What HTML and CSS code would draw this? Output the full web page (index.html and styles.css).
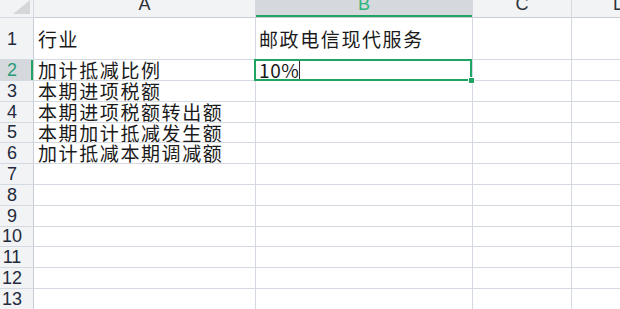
FILE: index.html
```html
<!DOCTYPE html>
<html lang="zh-CN">
<head>
  <meta charset="UTF-8" />
  <meta name="viewport" content="width=device-width, initial-scale=1" />
  <title>工作表</title>
  <link rel="stylesheet" href="styles.css">
</head>
<body>

  <div class="sheet">
    <!-- 列标题 -->
    <div class="corner"><span class="corner-mark"></span></div>
    <div class="col-head"><span>A</span></div>
    <div class="col-head active"><span>B</span></div>
    <div class="col-head"><span>C</span></div>
    <div class="col-head"><span>D</span></div>

    <div class="row-head">1</div>
    <div class="cell">行业</div>
    <div class="cell">邮政电信现代服务</div>
    <div class="cell"></div>
    <div class="cell"></div>

    <div class="row-head active">2</div>
    <div class="cell">加计抵减比例</div>
    <div class="cell selected"><span class="num">10%</span><span class="caret"></span><span class="handle"></span></div>
    <div class="cell"></div>
    <div class="cell"></div>

    <div class="row-head">3</div>
    <div class="cell">本期进项税额</div>
    <div class="cell"></div>
    <div class="cell"></div>
    <div class="cell"></div>

    <div class="row-head">4</div>
    <div class="cell">本期进项税额转出额</div>
    <div class="cell"></div>
    <div class="cell"></div>
    <div class="cell"></div>

    <div class="row-head">5</div>
    <div class="cell">本期加计抵减发生额</div>
    <div class="cell"></div>
    <div class="cell"></div>
    <div class="cell"></div>

    <div class="row-head">6</div>
    <div class="cell">加计抵减本期调减额</div>
    <div class="cell"></div>
    <div class="cell"></div>
    <div class="cell"></div>

    <div class="row-head">7</div>
    <div class="cell"></div>
    <div class="cell"></div>
    <div class="cell"></div>
    <div class="cell"></div>

    <div class="row-head">8</div>
    <div class="cell"></div>
    <div class="cell"></div>
    <div class="cell"></div>
    <div class="cell"></div>

    <div class="row-head">9</div>
    <div class="cell"></div>
    <div class="cell"></div>
    <div class="cell"></div>
    <div class="cell"></div>

    <div class="row-head">10</div>
    <div class="cell"></div>
    <div class="cell"></div>
    <div class="cell"></div>
    <div class="cell"></div>

    <div class="row-head">11</div>
    <div class="cell"></div>
    <div class="cell"></div>
    <div class="cell"></div>
    <div class="cell"></div>

    <div class="row-head">12</div>
    <div class="cell"></div>
    <div class="cell"></div>
    <div class="cell"></div>
    <div class="cell"></div>

    <div class="row-head">13</div>
    <div class="cell"></div>
    <div class="cell"></div>
    <div class="cell"></div>
    <div class="cell"></div>
  </div>

</body>
</html>
```

FILE: styles.css
```css
html, body {
  margin: 0;
  padding: 0;
  background: #fff;
  overflow: hidden;
}
.sheet {
  display: grid;
  grid-template-columns: 34px 222px 217px 99px 96px;
  grid-template-rows: 18px 42px 21px repeat(11, 20.8px);
  width: 668px;
  font-family: "Noto Sans CJK SC", "Liberation Sans", sans-serif;
}
.sheet > div {
  box-sizing: border-box;
  border-right: 1px solid #d5d9e2;
  border-bottom: 1px solid #d5d9e2;
  overflow: hidden;
  white-space: nowrap;
}
.corner {
  background: #f2f3f5;
  display: flex;
  justify-content: flex-end;
  align-items: flex-end;
  padding: 0 3px 3px 0;
}
.corner-mark {
  width: 0;
  height: 0;
  border-left: 17px solid transparent;
  border-bottom: 14px solid #d6d7da;
}
.col-head {
  background: #f2f3f5;
  text-align: center;
  font-family: "Liberation Sans", sans-serif;
  font-size: 18px;
  line-height: 18px;
  color: #2c3038;
  border-bottom-color: #c9cdd6 !important;
}
.col-head span {
  display: block;
  margin-top: -5px;
}
.col-head.active {
  background: #d5d8dd;
  color: #2cb57a;
  box-shadow: inset 0 -2px 0 #1fa463;
}
.row-head {
  background: #f2f3f5;
  display: flex;
  align-items: center;
  justify-content: center;
  padding-right: 9px;
  font-family: "Liberation Sans", sans-serif;
  font-size: 18px;
  line-height: 18px;
  color: #1f2a3c;
  border-right-color: #c9cdd6 !important;
}
.row-head.active {
  background: #d5d8dd;
  color: #2a9d76;
  box-shadow: inset -2px 0 0 #1fa463;
}
.cell {
  display: flex;
  align-items: center;
  padding-left: 3px;
  font-size: 19px;
  line-height: 20px;
  letter-spacing: 1.6px;
  color: #1a1a1a;
}
.cell:nth-child(5n+2) {
  padding-left: 4px;
}
.cell.selected {
  position: relative;
  overflow: visible;
}
.cell.selected::after {
  content: "";
  position: absolute;
  left: -2px;
  right: 0;
  top: -1px;
  bottom: -1px;
  border: 2px solid #1fa463;
  pointer-events: none;
}
.num {
  letter-spacing: 0.6px;
}
.caret {
  width: 1px;
  height: 18px;
  background: #3a2426;
}
.handle {
  position: absolute;
  right: -3px;
  bottom: -4px;
  width: 5px;
  height: 5px;
  background: #1fa463;
  border: 1px solid #fff;
  z-index: 2;
}
```
